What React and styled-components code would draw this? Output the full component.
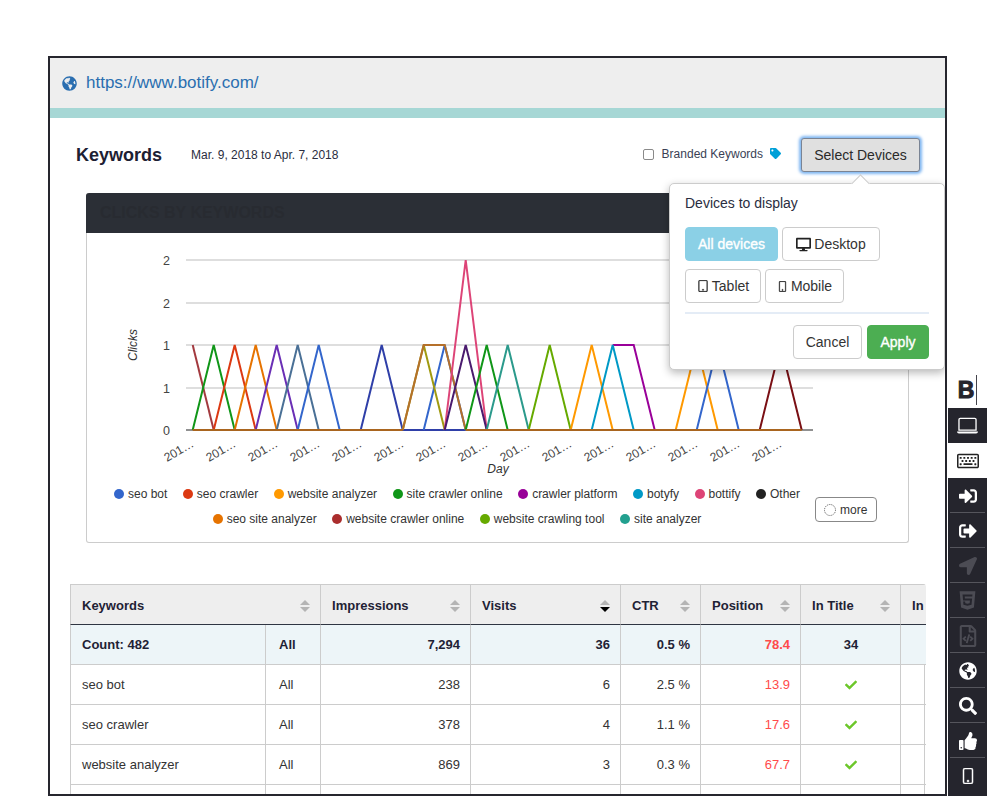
import React from "react";
import styled, { createGlobalStyle } from "styled-components";
import {
  FaCheck,
  FaDesktop,
  FaGlobeAmericas,
  FaHtml5,
  FaLocationArrow,
  FaRegFileCode,
  FaRegKeyboard,
  FaSearch,
  FaSignInAlt,
  FaSignOutAlt,
  FaTag,
  FaThumbsUp,
} from "react-icons/fa";
import { BsLaptop, BsPhone, BsTablet } from "react-icons/bs";

const GlobalStyle = createGlobalStyle`
  html, body {
    margin: 0;
    padding: 0;
    background: #fff;
    font-family: "Liberation Sans", Arial, sans-serif;
    color: #1f2235;
  }
  * { box-sizing: border-box; }
`;

const Page = styled.div`
  position: relative;
  width: 995px;
  height: 801px;
  padding: 56px 48px 5px;
  overflow: hidden;
`;

const Frame = styled.main`
  width: 899px;
  height: 740px;
  border: 2px solid #26262e;
  overflow: hidden;
`;

const UrlBar = styled.header`
  display: flex;
  align-items: center;
  gap: 9px;
  height: 50px;
  padding-left: 12px;
  background: #eee;
  color: #2a6eb0;
  font-size: 17px;
  svg { font-size: 15px; }
`;

const TealBar = styled.div`
  height: 10px;
  background: #a6d7d5;
`;

const TitleRow = styled.div`
  display: flex;
  align-items: center;
  height: 34px;
  margin: 20px 25px 0 26px;
`;

const Title = styled.h1`
  margin: 0 29px 0 0;
  font-size: 18px;
  font-weight: 700;
  color: #1d2033;
`;

const DateRange = styled.span`
  font-size: 12px;
  margin-top: -1px;
  color: #2a2d40;
`;

const Branded = styled.label`
  display: flex;
  align-items: center;
  margin-left: auto;
  margin-right: 20px;
  margin-top: -3px;
  font-size: 12px;
  color: #3a3f55;
  svg { margin-left: 7px; font-size: 11px; color: #00a0d8; }
`;

const CheckBox = styled.span`
  width: 11px;
  height: 11px;
  margin: 2px 8px 0 0;
  border: 1px solid #8a8a8a;
  border-radius: 2px;
  background: #fff;
`;

const DeviceSelect = styled.div`
  position: relative;
`;

const SelectButton = styled.button`
  width: 119px;
  height: 34px;
  padding: 0;
  border: 1px solid #7a8494;
  border-radius: 3px;
  box-shadow: 0 0 3px 2px #7fb6f2;
  background: #e0e0e0;
  color: #2a2a2a;
  font: 14px "Liberation Sans", Arial, sans-serif;
`;

const Popover = styled.div`
  position: absolute;
  top: 45px;
  right: -25px;
  z-index: 2;
  width: 276px;
  height: 187px;
  padding: 11px 15px 10px;
  border: 1px solid #ccc;
  border-radius: 5px;
  background: #fff;
  box-shadow: 0 3px 9px rgba(0, 0, 0, 0.28);

  &::before {
    content: "";
    position: absolute;
    top: -7px;
    left: 184px;
    width: 12px;
    height: 12px;
    border-left: 1px solid #ccc;
    border-top: 1px solid #ccc;
    background: #fff;
    transform: rotate(45deg);
  }
`;

const PopoverTitle = styled.div`
  height: 16px;
  margin-bottom: 16px;
  font-size: 14px;
  line-height: 16px;
  color: #2a2d40;
`;

const ButtonRow = styled.div`
  display: flex;
  justify-content: ${(p) => (p.$end ? "flex-end" : "flex-start")};
  gap: ${(p) => (p.$end ? "5px" : "4px")};
  margin-bottom: 8px;
`;

const DeviceButton = styled.button`
  display: flex;
  align-items: center;
  justify-content: center;
  gap: 3px;
  width: ${(p) => p.$w}px;
  height: 34px;
  padding: 0;
  border: 1px solid ${(p) => (p.$tone === "info" ? "#8bd0e6" : p.$tone === "ok" ? "#4cae52" : "#ccc")};
  border-radius: 4px;
  background: ${(p) => (p.$tone === "info" ? "#8bd0e6" : p.$tone === "ok" ? "#4cae52" : "#fff")};
  color: ${(p) => (p.$tone ? "#fff" : "#333")};
  font: 14px "Liberation Sans", Arial, sans-serif;
  -webkit-text-stroke: ${(p) => (p.$tone ? "0.35px #fff" : "0")};
  svg { color: #222; }
`;

const ThinIcon = styled.span`
  display: flex;
  svg { stroke: currentColor; stroke-width: 0.5; }
`;

const Divider = styled.hr`
  height: 2px;
  margin: 9px 0 11px;
  border: 0;
  background: #e4ecf6;
`;

const Card = styled.section`
  width: 823px;
  height: 350px;
  margin: 21px 0 0 36px;
  border: 1px solid #ccc;
  border-top: 0;
  border-radius: 3px;
`;

const CardHead = styled.div`
  display: flex;
  align-items: center;
  height: 40px;
  margin: 0 -1px;
  padding-left: 14px;
  border-radius: 3px 3px 0 0;
  background: #2b2f36;
  color: #282b31;
  font-size: 16px;
  font-weight: 700;
`;

const Chart = styled.svg`
  display: block;
  width: 821px;
  height: 254px;
  font-family: "Liberation Sans", Arial, sans-serif;
`;

const LegendRow = styled.div`
  display: flex;
  align-items: center;
  padding-left: 13px;
`;

const Legend = styled.ul`
  display: flex;
  flex-wrap: wrap;
  justify-content: center;
  gap: 11px 15.5px;
  width: 714px;
  margin: 0;
  padding: 0;
  list-style: none;
`;

const LegendItem = styled.li`
  display: flex;
  align-items: center;
  gap: 4px;
  height: 14px;
  font-size: 12px;
  color: #333;
`;

const Dot = styled.span`
  width: 10px;
  height: 10px;
  border-radius: 50%;
  background: ${(p) => p.$color};
`;

const MoreButton = styled.button`
  display: flex;
  align-items: center;
  gap: 4px;
  width: 62px;
  height: 25px;
  margin: 6px 0 0 1px;
  padding: 0 0 0 8px;
  border: 1px solid #888;
  border-radius: 4px;
  background: #fff;
  color: #333;
  font: 12px "Liberation Sans", Arial, sans-serif;
`;

const TableClip = styled.div`
  width: 856px;
  margin: 41px 0 0 20px;
  border-radius: 0 3px 0 0;
  overflow: hidden;
`;

const Table = styled.table`
  width: 915px;
  table-layout: fixed;
  border-collapse: separate;
  border-spacing: 0;
  font-size: 13px;
`;

const Head = styled.th`
  height: 41px;
  padding: 2px 10px 0 11px;
  border-top: 1px solid #ccc;
  border-bottom: 1px solid #2f3542;
  border-right: ${(p) => (p.$open ? "0" : "1px solid #ccc")};
  border-left: ${(p) => (p.$first ? "1px solid #ccc" : "0")};
  background: #eee;
  color: #1f2235;
  text-align: left;
  font-weight: 700;
`;

const HeadInner = styled.div`
  display: flex;
  align-items: center;
  justify-content: space-between;
`;

const Row = styled.tr`
  background: ${(p) => (p.$total ? "#edf5f8" : "#fff")};
  font-weight: ${(p) => (p.$total ? 700 : 400)};
`;

const Cell = styled.td`
  height: 40px;
  padding: 0 10px 0 ${(p) => (p.$inset ? 13 : 11)}px;
  border-bottom: 1px solid #ccc;
  border-right: ${(p) => (p.$open ? "0" : "1px solid #ccc")};
  border-left: ${(p) => (p.$first ? "1px solid #ccc" : "0")};
  text-align: ${(p) => p.$align || "left"};
  color: ${(p) => (p.$bad ? "#ff4a4a" : p.$total ? "#1f2235" : "#333")};
  svg { display: block; margin: 0 auto; font-size: 12px; color: #6cc72a; }
`;

const SideBar = styled.nav`
  position: absolute;
  top: 372px;
  left: 948px;
  width: 39px;
  height: 424px;
  background: #25252d;
`;

const SideItem = styled.div`
  position: relative;
  display: flex;
  align-items: center;
  justify-content: center;
  height: 35px;
  background: ${(p) => (p.$light ? "#fff" : "transparent")};
  color: ${(p) => (p.$light ? "#222" : p.$dim ? "#4c4c54" : "#fff")};
  font-size: ${(p) => p.$size || 18}px;

  ${(p) =>
    p.$line &&
    `&::after {
      content: "";
      position: absolute;
      left: 2px;
      right: 2px;
      bottom: 0;
      height: 1px;
      background: #55555c;
    }`}
`;

const LogoItem = styled(SideItem)`
  height: 36px;
  gap: 2px;
  font-size: 23px;
  font-weight: 700;
  line-height: 1;
  color: #25252d;
  -webkit-text-stroke: 1px #25252d;
  &::before {
    content: "";
    order: 1;
    width: 1px;
    height: 30px;
    background: #44444c;
  }
`;

const SortIcon = ({ active }) => (
  <svg width="10" height="12" viewBox="0 0 10 12">
    <path d="M5 0 L10 5 L0 5 Z" fill="#b4b4b4" />
    <path d="M0 7 L10 7 L5 12 Z" fill={active ? "#000" : "#b4b4b4"} />
  </svg>
);

// chart coordinates are page pixels, the viewBox maps them onto the card
const X = (i) => 192.7 + 21 * i;
const LEVEL = { 0: 430, 1: 345, 2: 260 };

const SERIES = [
  ["#a33a3f", [[0, 1], [1, 0]]],
  ["#109618", [[0, 0], [1, 1], [2, 0]]],
  ["#dc3912", [[1, 0], [2, 1], [3, 0]]],
  ["#e67300", [[2, 0], [3, 1], [4, 0]]],
  ["#6a2fb5", [[3, 0], [4, 1], [5, 0]]],
  ["#4a7096", [[4, 0], [5, 1], [6, 0]]],
  ["#3366cc", [[5, 0], [6, 1], [7, 0]]],
  ["#2f3fa8", [[8, 0], [9, 1], [10, 0], [13, 0]]],
  ["#3366cc", [[11, 0], [12, 1], [13, 0]]],
  ["#a09a10", [[10, 0], [11, 1], [12, 0]]],
  ["#b5702a", [[10, 0], [11, 1], [12, 1], [13, 0]]],
  ["#dd4477", [[12, 0], [13, 2], [14, 0]]],
  ["#4a1a6e", [[12, 0], [13, 1], [14, 0]]],
  ["#109618", [[13, 0], [14, 1], [15, 0]]],
  ["#2b9a8c", [[14, 0], [15, 1], [16, 0]]],
  ["#66aa00", [[16, 0], [17, 1], [18, 0]]],
  ["#ff9900", [[18, 0], [19, 1], [20, 0]]],
  ["#990099", [[20, 1], [21, 1], [22, 0]]],
  ["#0099c6", [[19, 0], [20, 1], [21, 0]]],
  ["#ff9900", [[23, 0], [24, 1], [25, 0]]],
  ["#3366cc", [[24, 0], [25, 1], [26, 0]]],
  ["#7a0f14", [[27, 0], [28, 1], [29, 0]]],
];

const BASELINE = [
  [[0, 10], "#a9651f"],
  [[13, 29], "#a9651f"],
];

const GRID = [
  [260, "2"],
  [303, "2"],
  [345, "1"],
  [388, "1"],
  [430, "0"],
];

const LEGEND = [
  ["seo bot", "#3366cc"],
  ["seo crawler", "#dc3912"],
  ["website analyzer", "#ff9900"],
  ["site crawler online", "#109618"],
  ["crawler platform", "#990099"],
  ["botyfy", "#0099c6"],
  ["bottify", "#dd4477"],
  ["Other", "#222"],
  ["seo site analyzer", "#e67300"],
  ["website crawler online", "#aa2d2d"],
  ["website crawling tool", "#66aa00"],
  ["site analyzer", "#22a08f"],
];

const COLUMNS = [196, 55, 150, 150, 80, 100, 100, 24, 60];

const HEADS = [
  { label: "Keywords", span: 2, first: true },
  { label: "Impressions" },
  { label: "Visits", active: true },
  { label: "CTR" },
  { label: "Position" },
  { label: "In Title" },
];

const ROWS = [
  { name: "seo bot", impressions: "238", visits: "6", ctr: "2.5 %", position: "13.9" },
  { name: "seo crawler", impressions: "378", visits: "4", ctr: "1.1 %", position: "17.6" },
  { name: "website analyzer", impressions: "869", visits: "3", ctr: "0.3 %", position: "67.7" },
];

const ClicksChart = () => (
  <Chart viewBox="87 233 821 254">
    {GRID.map(([y]) => (
      <line key={y} x1="186" x2="813" y1={y} y2={y} stroke={y === 430 ? "#222" : "#bdbdbd"} strokeWidth="1" />
    ))}
    {GRID.map(([y, label]) => (
      <text key={y} x="170" y={y + 4.5} fontSize="12.5" textAnchor="end" fill="#444">{label}</text>
    ))}
    {SERIES.map(([color, points], n) => (
      <polyline
        key={n}
        fill="none"
        stroke={color}
        strokeWidth="2"
        points={points.map(([i, l]) => `${X(i)},${LEVEL[l]}`).join(" ")}
      />
    ))}
    {BASELINE.map(([[from, to], color]) => (
      <line key={from} x1={X(from)} x2={X(to)} y1="430" y2="430" stroke={color} strokeWidth="2" />
    ))}
    {Array.from({ length: 15 }, (_, k) => (
      <text
        key={k}
        x={X(k * 2) + 2}
        y="446"
        fontSize="12"
        textAnchor="end"
        fill="#444"
        transform={`rotate(-30 ${X(k * 2) + 2} 446)`}
      >
        201…
      </text>
    ))}
    <text x="498" y="473" fontSize="12" fontStyle="italic" textAnchor="middle" fill="#333">Day</text>
    <text x="137" y="345" fontSize="12" fontStyle="italic" textAnchor="middle" fill="#333" transform="rotate(-90 137 345)">Clicks</text>
  </Chart>
);

const DevicePopover = () => (
  <Popover>
    <PopoverTitle>Devices to display</PopoverTitle>
    <ButtonRow>
      <DeviceButton $w={93} $tone="info">All devices</DeviceButton>
      <DeviceButton $w={98}><FaDesktop size={15} /> Desktop</DeviceButton>
    </ButtonRow>
    <ButtonRow>
      <DeviceButton $w={76}><ThinIcon><BsTablet size={12} /></ThinIcon> Tablet</DeviceButton>
      <DeviceButton $w={79}><ThinIcon><BsPhone size={11} /></ThinIcon> Mobile</DeviceButton>
    </ButtonRow>
    <Divider />
    <ButtonRow $end>
      <DeviceButton $w={69}>Cancel</DeviceButton>
      <DeviceButton $w={62} $tone="ok">Apply</DeviceButton>
    </ButtonRow>
  </Popover>
);

export default function App() {
  return (
    <Page>
      <GlobalStyle />
      <Frame>
        <UrlBar>
          <FaGlobeAmericas />
          https://www.botify.com/
        </UrlBar>
        <TealBar />
        <TitleRow>
          <Title>Keywords</Title>
          <DateRange>Mar. 9, 2018 to Apr. 7, 2018</DateRange>
          <Branded>
            <CheckBox />
            Branded Keywords
            <FaTag />
          </Branded>
          <DeviceSelect>
            <SelectButton>Select Devices</SelectButton>
            <DevicePopover />
          </DeviceSelect>
        </TitleRow>
        <Card>
          <CardHead>CLICKS BY KEYWORDS</CardHead>
          <ClicksChart />
          <LegendRow>
            <Legend>
              {LEGEND.map(([label, color]) => (
                <LegendItem key={label}>
                  <Dot $color={color} />
                  {label}
                </LegendItem>
              ))}
            </Legend>
            <MoreButton>
              <svg width="12" height="12" viewBox="0 0 12 12">
                <circle cx="6" cy="6" r="5.5" fill="none" stroke="#555" strokeWidth="1" strokeDasharray="1 1" />
              </svg>
              more
            </MoreButton>
          </LegendRow>
        </Card>
        <TableClip>
          <Table>
            <colgroup>
              {COLUMNS.map((w, i) => <col key={i} style={{ width: w }} />)}
            </colgroup>
            <thead>
              <tr>
                {HEADS.map((h) => (
                  <Head key={h.label} colSpan={h.span} $first={h.first}>
                    <HeadInner>
                      {h.label}
                      <SortIcon active={h.active} />
                    </HeadInner>
                  </Head>
                ))}
                <Head colSpan={2} $open>In</Head>
              </tr>
            </thead>
            <tbody>
              <Row $total>
                <Cell $first $total>Count: 482</Cell>
                <Cell $total $inset>All</Cell>
                <Cell $total $align="right">7,294</Cell>
                <Cell $total $align="right">36</Cell>
                <Cell $total $align="right">0.5 %</Cell>
                <Cell $total $align="right" $bad>78.4</Cell>
                <Cell $total $align="center">34</Cell>
                <Cell $total $open />
                <Cell $total $open />
              </Row>
              {ROWS.map((r) => (
                <Row key={r.name}>
                  <Cell $first>{r.name}</Cell>
                  <Cell $inset>All</Cell>
                  <Cell $align="right">{r.impressions}</Cell>
                  <Cell $align="right">{r.visits}</Cell>
                  <Cell $align="right">{r.ctr}</Cell>
                  <Cell $align="right" $bad>{r.position}</Cell>
                  <Cell><FaCheck /></Cell>
                  <Cell />
                  <Cell $open />
                </Row>
              ))}
              <Row>
                <Cell $first />
                <Cell />
                <Cell />
                <Cell />
                <Cell />
                <Cell />
                <Cell />
                <Cell />
                <Cell $open />
              </Row>
            </tbody>
          </Table>
        </TableClip>
      </Frame>
      <SideBar>
        <LogoItem $light>B</LogoItem>
        <SideItem $size={21}><BsLaptop /></SideItem>
        <SideItem $light $size={22}><FaRegKeyboard /></SideItem>
        <SideItem $line><FaSignInAlt /></SideItem>
        <SideItem $line><FaSignOutAlt /></SideItem>
        <SideItem $line $dim><FaLocationArrow /></SideItem>
        <SideItem $line $dim $size={21}><FaHtml5 /></SideItem>
        <SideItem $line $dim $size={22}><FaRegFileCode /></SideItem>
        <SideItem $line><FaGlobeAmericas /></SideItem>
        <SideItem $line><FaSearch /></SideItem>
        <SideItem $line><FaThumbsUp /></SideItem>
        <SideItem $size={16}><ThinIcon><BsPhone /></ThinIcon></SideItem>
      </SideBar>
    </Page>
  );
}
